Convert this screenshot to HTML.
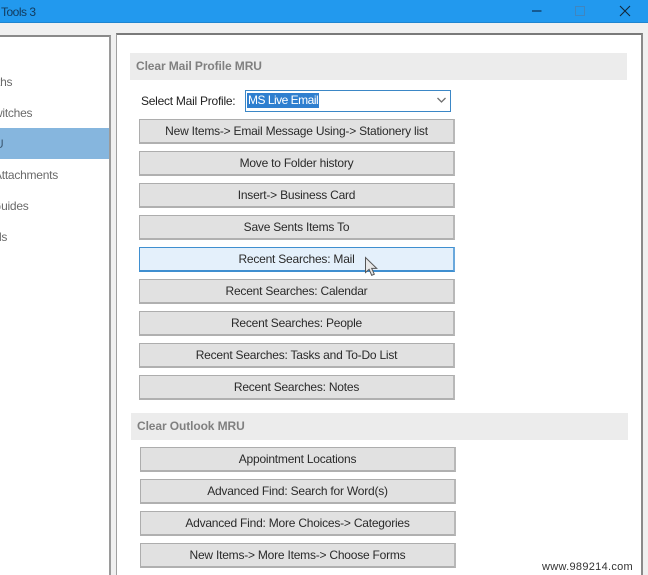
<!DOCTYPE html>
<html>
<head>
<meta charset="utf-8">
<style>
html,body{margin:0;padding:0;width:648px;height:575px;overflow:hidden;background:#f0f0f0;font-family:"Liberation Sans",sans-serif;}
#w{position:absolute;left:0;top:0;width:648px;height:575px;overflow:hidden;filter:blur(0.35px);}
.a{position:absolute;box-sizing:border-box;}
.b{position:absolute;box-sizing:border-box;width:316px;height:25px;background:#e1e1e1;border:1px solid #adadad;border-bottom:2px solid #b0b0b0;border-right:2px solid #b8b8b8;text-align:center;font-size:12px;line-height:23px;color:#2a2a2a;letter-spacing:-0.22px;white-space:nowrap;}
.t{position:absolute;font-size:12px;line-height:14px;color:#6a6a6a;white-space:nowrap;letter-spacing:-0.25px;}
.h{position:absolute;box-sizing:border-box;width:497px;height:27px;background:#ececec;font-size:12px;font-weight:bold;line-height:27px;color:#808080;padding-left:6px;white-space:nowrap;letter-spacing:-0.1px;}
</style>
</head>
<body>
<div id="w">
<div class="a" style="left:0;top:0;width:648px;height:23px;background:#2299ee;border-bottom:1px solid #1f85d0;"></div>
<div class="t" style="left:1px;top:5px;color:#123a5c;letter-spacing:-0.5px;">Tools 3</div>
<svg class="a" style="left:0;top:0;" width="648" height="23">
<path d="M532 11h9.5" stroke="#10406a" stroke-width="1.4" fill="none"/>
<rect x="575.5" y="6.5" width="9" height="9" fill="none" stroke="#3f86c0" stroke-width="1"/>
<path d="M620 6l10 10M630 6l-10 10" stroke="#12283c" stroke-width="1.1" fill="none"/>
</svg>
<div class="a" style="left:-2px;top:35px;width:113px;height:545px;background:#fff;border:1px solid #a0a0a0;border-top:2px solid #8a8a8a;border-right:2px solid #9a9a9a;"></div>
<div class="a" style="left:0;top:128px;width:109px;height:31px;background:#86b6de;"></div>
<div class="t" style="left:-3px;top:75px;">ths</div>
<div class="t" style="left:-6px;top:106px;">witches</div>
<div class="t" style="left:-5px;top:137px;color:#3d5a75;">U</div>
<div class="t" style="left:-6px;top:168px;">Attachments</div>
<div class="t" style="left:-8px;top:199px;">Guides</div>
<div class="t" style="left:-1px;top:230px;">ls</div>

<div class="a" style="left:116px;top:33px;width:527px;height:550px;background:#fff;border:1px solid #a0a0a0;border-top:2px solid #7a7a7a;border-right:2px solid #8a8a8a;"></div>

<div class="h" style="left:130px;top:53px;">Clear Mail Profile MRU</div>
<div class="t" style="left:141px;top:94px;color:#222;">Select Mail Profile:</div>
<div class="a" style="left:245px;top:90px;width:206px;height:22px;border:1px solid #3b87c6;background:#fff;"></div>
<div class="a" style="left:247px;top:93px;width:72px;height:15px;background:#2f7fcf;color:#fff;font-size:12px;line-height:15px;white-space:nowrap;padding-left:1px;letter-spacing:-0.5px;">MS Live Email</div>
<svg class="a" style="left:436px;top:96px;" width="12" height="10"><path d="M1.5 2l4 4 4-4" stroke="#707070" stroke-width="1.3" fill="none"/></svg>

<div class="b" style="left:139px;top:119px;">New Items-&gt; Email Message Using-&gt; Stationery list</div>
<div class="b" style="left:139px;top:151px;">Move to Folder history</div>
<div class="b" style="left:139px;top:183px;">Insert-&gt; Business Card</div>
<div class="b" style="left:139px;top:215px;">Save Sents Items To</div>
<div class="b" style="left:139px;top:247px;background:#e4f0fb;border:1px solid #3f8fd0;border-bottom:2px solid #3f8fd0;border-right:2px solid #6aa8dc;">Recent Searches: Mail</div>
<div class="b" style="left:139px;top:279px;">Recent Searches: Calendar</div>
<div class="b" style="left:139px;top:311px;">Recent Searches: People</div>
<div class="b" style="left:139px;top:343px;">Recent Searches: Tasks and To-Do List</div>
<div class="b" style="left:139px;top:375px;">Recent Searches: Notes</div>

<div class="h" style="left:131px;top:413px;">Clear Outlook MRU</div>
<div class="b" style="left:140px;top:447px;">Appointment Locations</div>
<div class="b" style="left:140px;top:479px;">Advanced Find: Search for Word(s)</div>
<div class="b" style="left:140px;top:511px;">Advanced Find: More Choices-&gt; Categories</div>
<div class="b" style="left:140px;top:543px;">New Items-&gt; More Items-&gt; Choose Forms</div>

<svg class="a" style="left:363px;top:256px;" width="18" height="22">
<path d="M2.5 1.5v15l3.6-3.2 2.6 6 2.6-1.1-2.6-5.8h5z" fill="#e8e8e8" stroke="#555" stroke-width="1"/>
</svg>
<div class="t" style="left:542px;top:560px;font-size:11px;color:#333;letter-spacing:0.3px;">www.989214.com</div>
</div>
</body>
</html>
